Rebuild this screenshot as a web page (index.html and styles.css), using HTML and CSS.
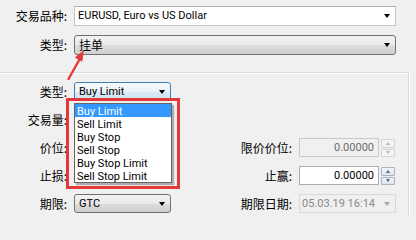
FILE: index.html
```html
<!DOCTYPE html>
<html lang="zh">
<head>
<meta charset="utf-8">
<title>挂单</title>
<link rel="stylesheet" href="styles.css">
</head>
<body>
<div class="dialog">
  <div class="top">
    <span class="lbl">交易品种:</span>
    <div class="combo edit"><span class="val">EURUSD, Euro vs US Dollar</span><span class="arrow"></span></div>
    <span class="lbl">类型:</span>
    <div class="combo btn"><span class="val cjk">挂单</span><span class="arrow"></span></div>
  </div>
  <div class="group">
    <div class="grid">
      <span class="lbl">类型:</span>
      <div class="combo btn focus"><span class="val">Buy Limit</span><span class="arrow"></span></div>
      <span></span><span></span>

      <span class="lbl">交易量:</span>
      <span></span><span></span><span></span>

      <span class="lbl">价位:</span>
      <span></span>
      <span class="lbl">限价价位:</span>
      <div class="spin disabled">
        <span class="num">0.00000</span>
        <span class="spinner"><span class="up"></span><span class="down"></span></span>
      </div>

      <span class="lbl">止损:</span>
      <span></span>
      <span class="lbl">止赢:</span>
      <div class="spin">
        <span class="num">0.00000</span>
        <span class="spinner"><span class="up"></span><span class="down"></span></span>
      </div>

      <span class="lbl">期限:</span>
      <div class="combo btn"><span class="val">GTC</span><span class="arrow"></span></div>
      <span class="lbl">期限日期:</span>
      <div class="date"><span class="val">05.03.19 16:14</span><span class="arrow"></span></div>
    </div>
  </div>

  <ul class="droplist">
    <li class="sel">Buy Limit</li>
    <li>Sell Limit</li>
    <li>Buy Stop</li>
    <li>Sell Stop</li>
    <li>Buy Stop Limit</li>
    <li>Sell Stop Limit</li>
  </ul>
  <div class="mark"></div>
  <svg class="pointer" width="416" height="216" viewBox="0 0 416 216">
    <line x1="68.5" y1="79" x2="79.5" y2="59.5" stroke="#e5383b" stroke-width="2.4" stroke-linecap="round"/>
    <polygon points="84,50 82.2,61.8 74.8,57.4" fill="#e5383b"/>
  </svg>
</div>
</body>
</html>
```

FILE: styles.css
```css
html, body {
  margin: 0;
  padding: 0;
  background: #f0f0f0;
}

body {
  font-family: Roboto, "Noto Sans CJK SC", sans-serif;
  font-size: 11px;
  color: #000;
  width: 416px;
  height: 216px;
  overflow: hidden;
}

.dialog {
  position: relative;
  width: 416px;
  height: 216px;
}

.top {
  display: grid;
  grid-template-columns: 67px 322px;
  grid-auto-rows: 20px;
  column-gap: 7px;
  row-gap: 9px;
  padding-top: 6px;
}

.lbl {
  font-family: "Noto Sans CJK SC", sans-serif;
  font-size: 12px;
  text-align: right;
  line-height: 19px;
  white-space: nowrap;
}

.top .lbl {
  line-height: 20px;
}

.cjk {
  font-family: "Noto Sans CJK SC", sans-serif;
  font-size: 12px;
}

.combo {
  box-sizing: border-box;
  display: flex;
  align-items: center;
  justify-content: space-between;
  padding: 0 5px 0 3px;
  height: 100%;
  white-space: nowrap;
}

.combo .val {
  line-height: 16px;
}

.arrow {
  width: 0;
  height: 0;
  border-left: 3.5px solid transparent;
  border-right: 3.5px solid transparent;
  border-top: 4px solid #000;
  flex: none;
}

.combo.edit {
  background: #fff;
  border: 1px solid #c5c5c5;
  border-top-color: #abadb3;
  border-radius: 1px;
}

.combo.btn {
  border: 1px solid #707070;
  border-radius: 3px;
  background: linear-gradient(#f2f2f2 0%, #ebebeb 50%, #dddddd 51%, #cfcfcf 100%);
  padding-left: 4px;
}

.combo.btn.focus {
  border-color: #3c7fb1;
  background: linear-gradient(#f5f9fc 0%, #eaf2f8 50%, #dbe9f4 51%, #cfe2f1 100%);
}

.grid .combo .val {
  line-height: 17px;
}

.group {
  box-sizing: border-box;
  width: 409px;
  margin-top: 17px;
  height: 150px;
  border-top: 1px solid #d5dfe5;
  border-right: 1px solid #d5dfe5;
  box-shadow: inset 0 1px 0 #fff, 1px 0 0 #fff;
  padding-top: 9px;
}

.grid {
  display: grid;
  grid-template-columns: 67px 97px 114px 96px;
  grid-auto-rows: 19px;
  column-gap: 7px;
  row-gap: 9px;
}

.spin {
  display: flex;
  gap: 2px;
  height: 19px;
}

.num {
  box-sizing: border-box;
  flex: 1;
  background: #fff;
  border: 1px solid #abadb3;
  text-align: right;
  padding-right: 4px;
  line-height: 17px;
}

.spin.disabled .num {
  background: #f0f0f0;
  border-color: #c9c9c9;
  color: #6d6d6d;
}

.spinner {
  display: flex;
  flex-direction: column;
  gap: 1px;
  width: 14px;
  padding-top: 1px;
}

.spinner span {
  box-sizing: border-box;
  flex: 1;
  border: 1px solid #a8b4c4;
  border-radius: 1px;
  background: linear-gradient(#f3f6fa, #dce4ee);
  display: flex;
  align-items: center;
  justify-content: center;
}

.spinner .up::before,
.spinner .down::before {
  content: "";
  width: 0;
  height: 0;
  border-left: 2.5px solid transparent;
  border-right: 2.5px solid transparent;
}

.spinner .up::before {
  border-bottom: 3px solid #4d6185;
}

.spinner .down::before {
  border-top: 3px solid #4d6185;
}

.spin.disabled .spinner span {
  border-color: #d3d3d3;
  background: #f4f4f4;
}

.spin.disabled .spinner .up::before {
  border-bottom-color: #b4b4b4;
}

.spin.disabled .spinner .down::before {
  border-top-color: #b4b4b4;
}

.date {
  box-sizing: border-box;
  display: flex;
  align-items: center;
  justify-content: space-between;
  height: 19px;
  width: 97px;
  border: 1px solid #d9d9d9;
  padding: 0 5px 0 2px;
  color: #8a8a8a;
  white-space: nowrap;
}

.date .val {
  line-height: 17px;
}

.date .arrow {
  border-top-color: #a8a8a8;
}

.droplist {
  position: absolute;
  left: 74px;
  top: 103px;
  width: 98px;
  margin: 0;
  padding: 0;
  list-style: none;
  box-sizing: border-box;
  background: #fff;
  border: 1px solid #646464;
  box-shadow: 2px 2px 1px rgba(0, 0, 0, 0.28);
}

.droplist li {
  height: 13px;
  line-height: 15px;
  padding-left: 2px;
  white-space: nowrap;
  overflow: hidden;
}

.droplist li.sel {
  background: #3399ff;
  color: #fff;
}

.mark {
  position: absolute;
  left: 66px;
  top: 98px;
  width: 114px;
  height: 91px;
  box-sizing: border-box;
  border: 3px solid #e5383b;
}

.pointer {
  position: absolute;
  left: 0;
  top: 0;
  pointer-events: none;
}
```
